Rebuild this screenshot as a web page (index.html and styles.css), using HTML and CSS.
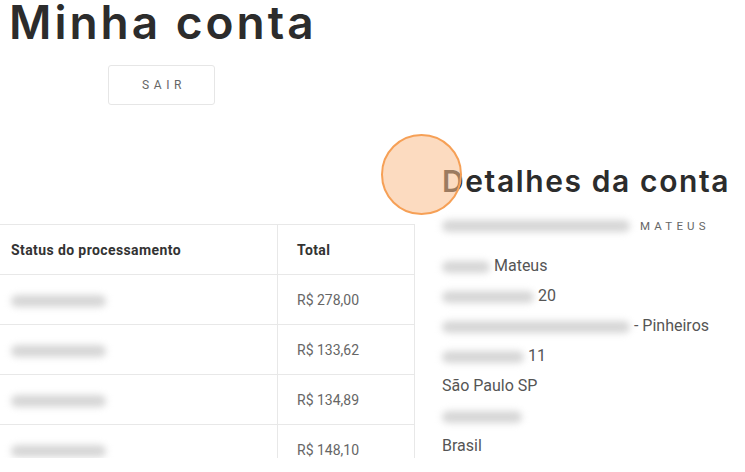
FILE: index.html
```html
<!DOCTYPE html>
<html lang="pt-BR">
<head>
<meta charset="utf-8">
<title>Minha conta</title>
<link rel="stylesheet" href="styles.css">
</head>
<body>
<div class="page">
  <h1 class="title">Minha conta</h1>
  <div class="logout-wrap"><a class="logout" href="#">SAIR</a></div>
  <div class="columns">
    <div class="orders">
      <table class="orders-table">
        <thead>
          <tr><th class="c-status">Status do processamento</th><th class="c-total">Total</th></tr>
        </thead>
        <tbody>
          <tr><td class="c-status"><span class="blur w95"></span></td><td class="c-total">R$ 278,00</td></tr>
          <tr><td class="c-status"><span class="blur w95"></span></td><td class="c-total">R$ 133,62</td></tr>
          <tr><td class="c-status"><span class="blur w95"></span></td><td class="c-total">R$ 134,89</td></tr>
          <tr><td class="c-status"><span class="blur w95"></span></td><td class="c-total">R$ 148,10</td></tr>
        </tbody>
      </table>
    </div>
    <div class="details">
      <h2 class="details-title">Detalhes da conta</h2>
      <div class="details-name"><span class="blur w188"></span><span class="caps">MATEUS</span></div>
      <ul class="address">
        <li><span class="blur w48"></span> Mateus</li>
        <li><span class="blur w92"></span> 20</li>
        <li><span class="blur w188"></span> - Pinheiros</li>
        <li><span class="blur w82"></span> 11</li>
        <li>São Paulo SP</li>
        <li><span class="blur w80"></span></li>
        <li>Brasil</li>
      </ul>
    </div>
  </div>
  <div class="cursor-dot"></div>
</div>
</body>
</html>
```
FILE: styles.css
```css
* { box-sizing: border-box; }
html, body { margin: 0; padding: 0; background: #fff; }
body { font-family: Roboto, "Liberation Sans", sans-serif; color: #555; }

.page {
  position: relative;
  width: 745px;
  height: 458px;
  overflow: hidden;
}

.title {
  margin: 0;
  padding: 0 0 0 9px;
  height: 52px;
  font-family: Inter, "Liberation Sans", sans-serif;
  font-weight: 600;
  font-size: 46px;
  line-height: 44px;
  letter-spacing: 3px;
  color: #2c2c2c;
  white-space: nowrap;
}

.logout-wrap { padding: 13px 0 0 108px; height: 105px; }
.logout {
  display: flex;
  align-items: center;
  justify-content: center;
  width: 107px;
  height: 40px;
  border: 1px solid #e6e6e6;
  border-radius: 3px;
  font-size: 12px;
  letter-spacing: 4.6px;
  padding-left: 5px;
  color: #666;
  text-decoration: none;
}

.columns {
  display: grid;
  grid-template-columns: 416px 1fr;
  column-gap: 26px;
  padding-top: 6px;
}

.orders { padding-top: 61px; }
.orders-table {
  border-collapse: collapse;
  width: 416px;
  margin-left: -1px;
  font-size: 14px;
}
.orders-table th, .orders-table td {
  border: 1px solid #e8e8e8;
  height: 50px;
  padding: 0 0 0 19px;
  text-align: left;
  vertical-align: middle;
}
.orders-table th { font-weight: 700; color: #333; letter-spacing: 0.4px; }
.orders-table td { color: #666; padding-top: 1px; }
.orders-table .c-status { width: 278px; padding-left: 11px; }
.orders-table td.c-status { padding-top: 0; }

.blur {
  display: inline-block;
  height: 12px;
  border-radius: 6px;
  background: #d6d6d6;
  filter: blur(3.5px);
  vertical-align: middle;
}
.w95 { width: 95px; }
.w188 { width: 188px; }
.w48 { width: 48px; }
.w92 { width: 92px; }
.w82 { width: 82px; }
.w80 { width: 80px; }

.details-title {
  margin: 0;
  font-family: Inter, "Liberation Sans", sans-serif;
  font-weight: 600;
  font-size: 30px;
  line-height: 36px;
  letter-spacing: 1.6px;
  color: #2c2c2c;
  white-space: nowrap;
}

.details-name {
  display: flex;
  align-items: center;
  gap: 10px;
  height: 24px;
  margin-top: 15px;
}
.caps {
  font-size: 11.5px;
  letter-spacing: 4.2px;
  color: #666;
}

.address {
  list-style: none;
  margin: 13px 0 0;
  padding: 0;
  font-size: 16px;
  line-height: 30px;
  color: #555;
}
.address li { height: 30px; white-space: nowrap; }

.cursor-dot {
  position: absolute;
  left: 381px;
  top: 134px;
  width: 81px;
  height: 81px;
  border-radius: 50%;
  background: rgba(250, 190, 140, 0.55);
  border: 2px solid #f6a056;
}
```
